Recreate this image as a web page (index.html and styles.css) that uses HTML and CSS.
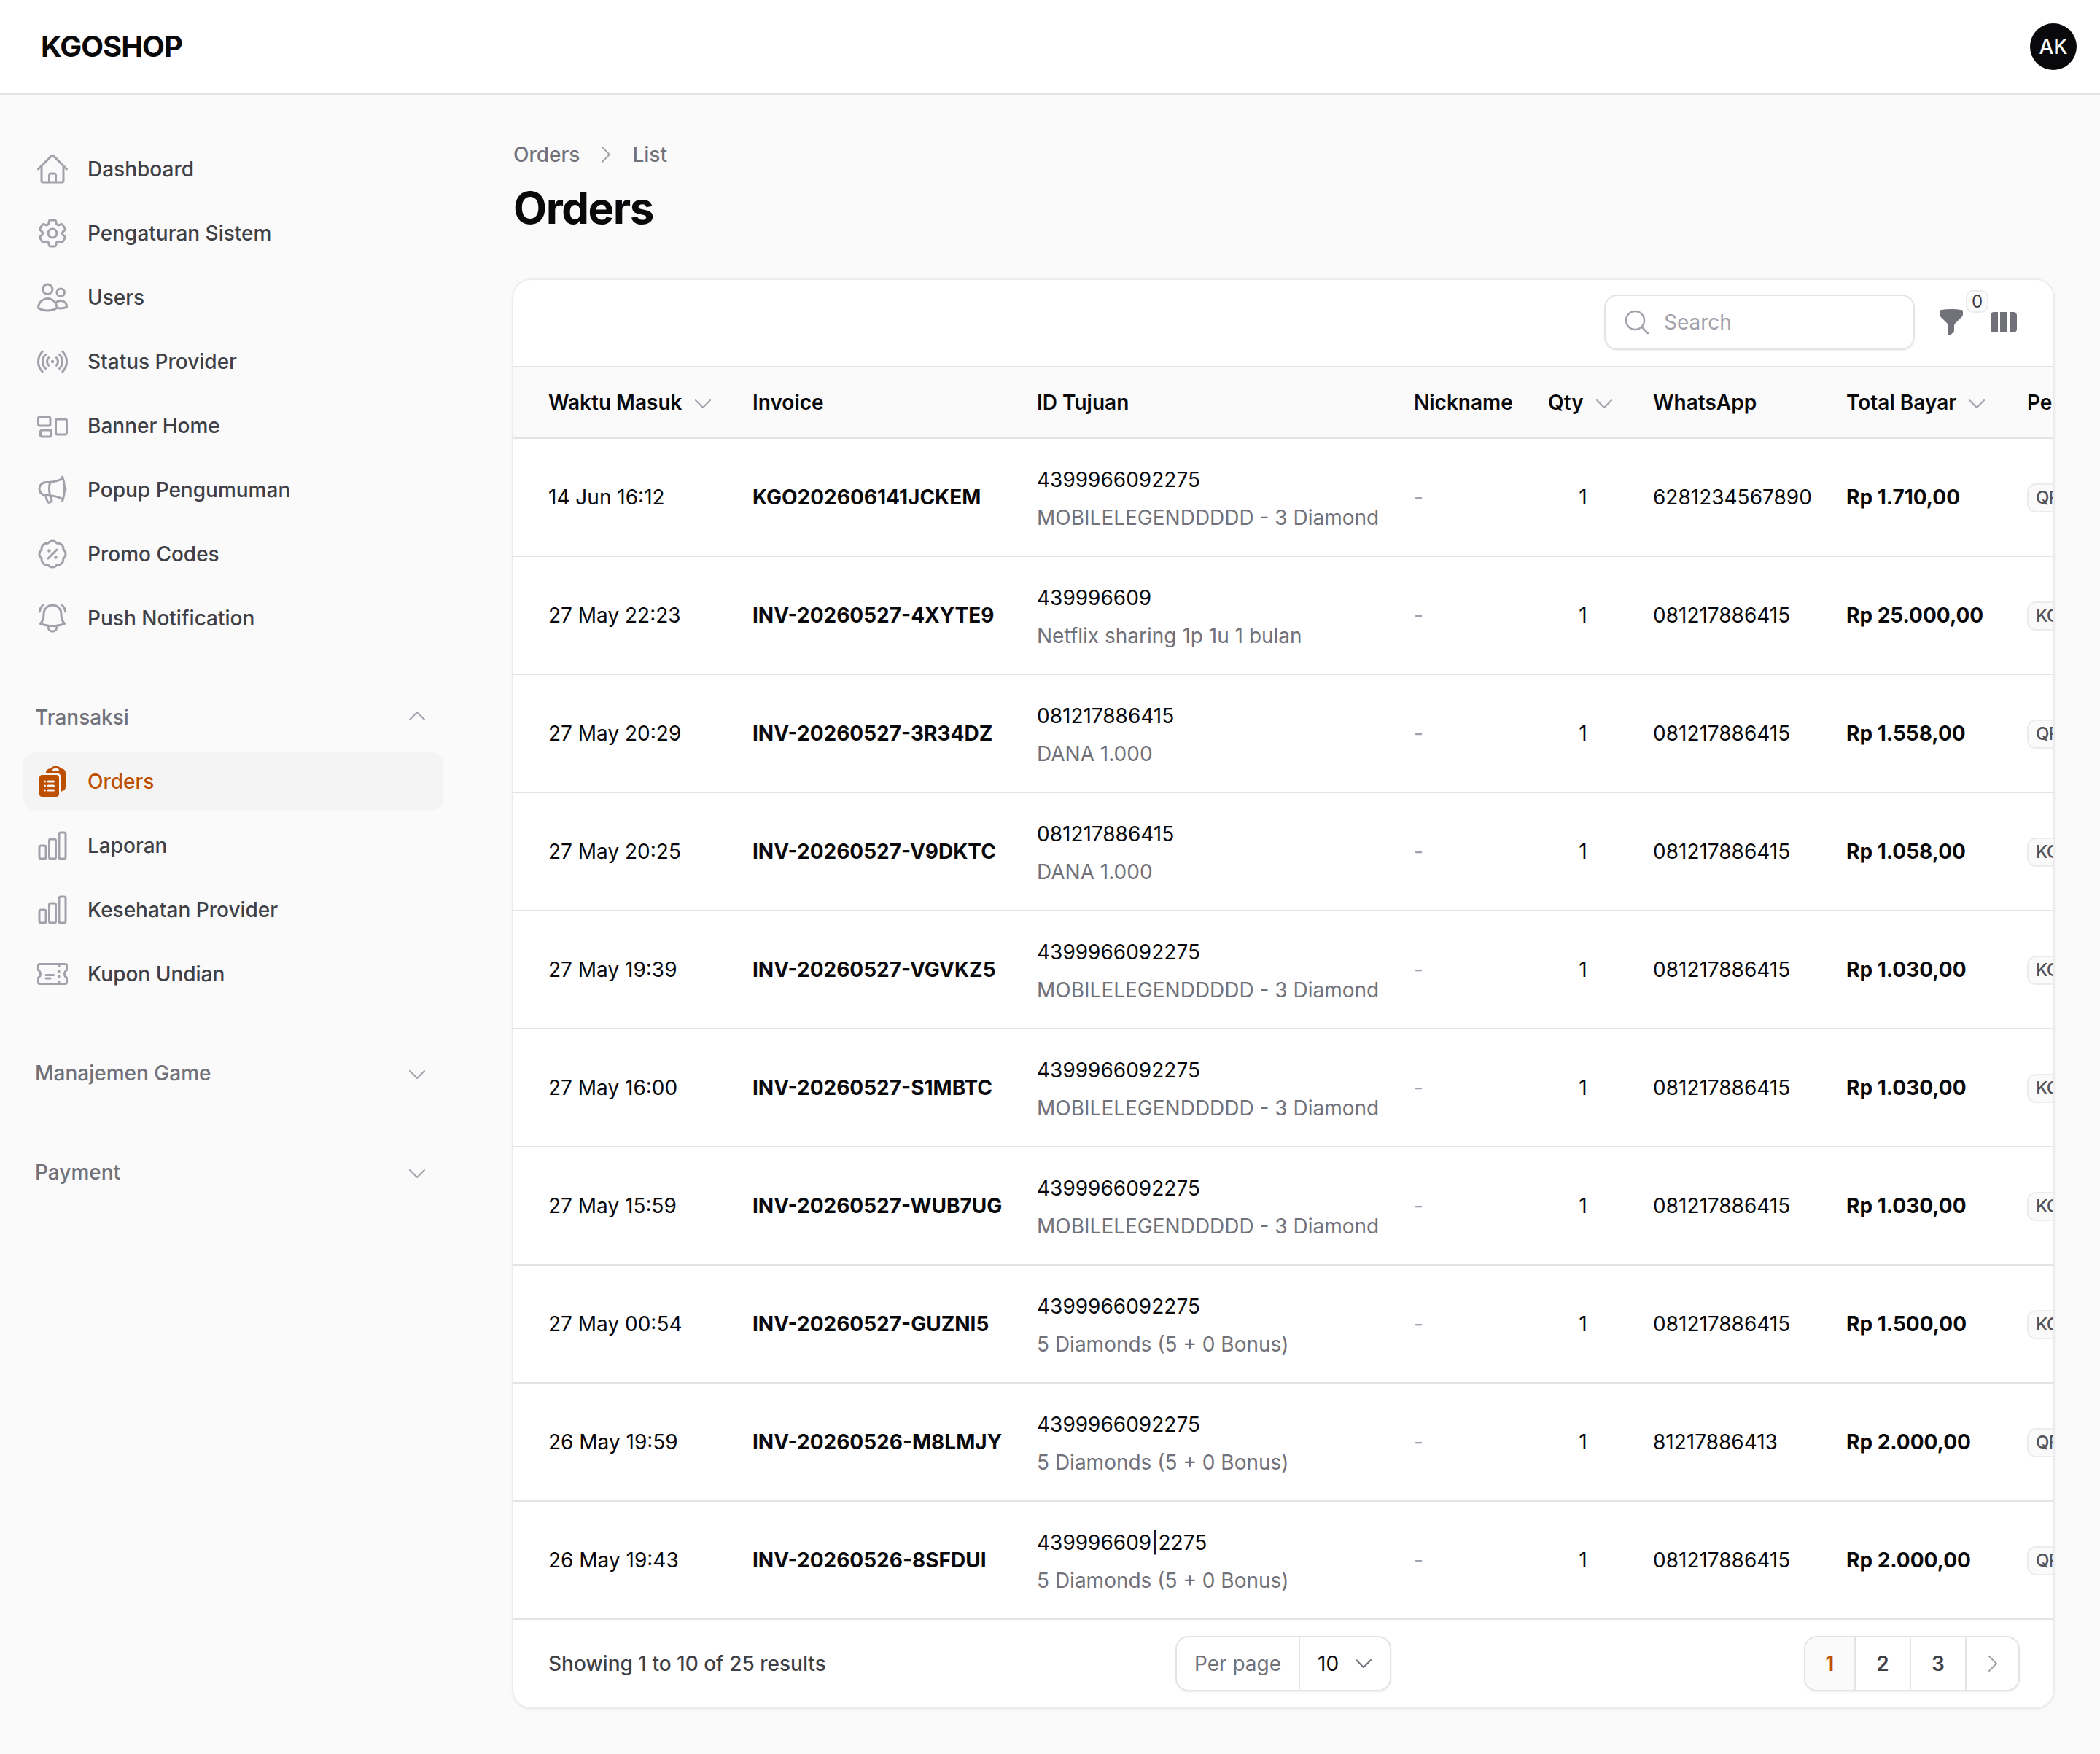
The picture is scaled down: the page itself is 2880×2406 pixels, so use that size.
FILE: index.html
```html
<!DOCTYPE html>
<html lang="id">
<head>
<meta charset="utf-8">
<title>Orders - KGOSHOP</title>
<link rel="stylesheet" href="styles.css">
</head>
<body>
<svg class="sprite" aria-hidden="true">
  <symbol id="chev-up" viewBox="0 0 24 24"><path d="m4.5 14.25 7.5-7.5 7.5 7.5"/></symbol>
  <symbol id="chev-down" viewBox="0 0 24 24"><path d="m19.5 9.75-7.5 7.5-7.5-7.5"/></symbol>
  <symbol id="chev-right" viewBox="0 0 24 24"><path d="m8.25 4.5 7.5 7.5-7.5 7.5"/></symbol>
  <symbol id="bars" viewBox="0 0 24 24"><path d="M3 13.125C3 12.504 3.504 12 4.125 12h2.25c.621 0 1.125.504 1.125 1.125v6.75C7.5 20.496 6.996 21 6.375 21h-2.25A1.125 1.125 0 0 1 3 19.875v-6.75ZM9.75 8.625c0-.621.504-1.125 1.125-1.125h2.25c.621 0 1.125.504 1.125 1.125v11.25c0 .621-.504 1.125-1.125 1.125h-2.25a1.125 1.125 0 0 1-1.125-1.125V8.625ZM16.5 4.125c0-.621.504-1.125 1.125-1.125h2.25C20.496 3 21 3.504 21 4.125v15.75c0 .621-.504 1.125-1.125 1.125h-2.25a1.125 1.125 0 0 1-1.125-1.125V4.125Z"/></symbol>
</svg>

<header class="topbar">
  <div class="logo">KGOSHOP</div>
  <div class="avatar">AK</div>
</header>

<div class="shell">
  <aside class="sidebar">
    <nav class="nav-group">
      <a class="nav-item"><svg class="nav-icon" viewBox="0 0 24 24"><path d="m2.25 12 8.954-8.955c.44-.439 1.152-.439 1.591 0L21.75 12M4.5 9.75v10.125c0 .621.504 1.125 1.125 1.125H9.75v-4.875c0-.621.504-1.125 1.125-1.125h2.25c.621 0 1.125.504 1.125 1.125V21h4.125c.621 0 1.125-.504 1.125-1.125V9.75M8.25 21h8.25"/></svg><span>Dashboard</span></a>
      <a class="nav-item"><svg class="nav-icon" viewBox="0 0 24 24"><path d="M9.594 3.94c.09-.542.56-.94 1.11-.94h2.593c.55 0 1.02.398 1.11.94l.213 1.281c.063.374.313.686.645.87.074.04.147.083.22.127.325.196.72.257 1.075.124l1.217-.456a1.125 1.125 0 0 1 1.37.49l1.296 2.247a1.125 1.125 0 0 1-.26 1.431l-1.003.827c-.293.241-.438.613-.43.992a7.723 7.723 0 0 1 0 .255c-.008.378.137.75.43.991l1.004.827c.424.35.534.955.26 1.43l-1.298 2.247a1.125 1.125 0 0 1-1.369.491l-1.217-.456c-.355-.133-.75-.072-1.076.124a6.47 6.47 0 0 1-.22.128c-.331.183-.581.495-.644.869l-.213 1.281c-.09.543-.56.94-1.11.94h-2.594c-.55 0-1.019-.398-1.11-.94l-.213-1.281c-.062-.374-.312-.686-.644-.87a6.52 6.52 0 0 1-.22-.127c-.325-.196-.72-.257-1.076-.124l-1.217.456a1.125 1.125 0 0 1-1.369-.49l-1.297-2.247a1.125 1.125 0 0 1 .26-1.431l1.004-.827c.292-.24.437-.613.43-.991a6.932 6.932 0 0 1 0-.255c.007-.38-.138-.751-.43-.992l-1.004-.827a1.125 1.125 0 0 1-.26-1.43l1.297-2.247a1.125 1.125 0 0 1 1.37-.491l1.216.456c.356.133.751.072 1.076-.124.072-.044.146-.086.22-.128.332-.183.582-.495.644-.869l.214-1.28Z"/><path d="M15 12a3 3 0 1 1-6 0 3 3 0 0 1 6 0Z"/></svg><span>Pengaturan Sistem</span></a>
      <a class="nav-item"><svg class="nav-icon" viewBox="0 0 24 24"><path d="M15 19.128a9.38 9.38 0 0 0 2.625.372 9.337 9.337 0 0 0 4.121-.952 4.125 4.125 0 0 0-7.533-2.493M15 19.128v-.003c0-1.113-.285-2.16-.786-3.07M15 19.128v.106A12.318 12.318 0 0 1 8.624 21c-2.331 0-4.512-.645-6.374-1.766l-.001-.109a6.375 6.375 0 0 1 11.964-3.07M12 6.375a3.375 3.375 0 1 1-6.75 0 3.375 3.375 0 0 1 6.75 0Zm8.25 2.25a2.625 2.625 0 1 1-5.25 0 2.625 2.625 0 0 1 5.25 0Z"/></svg><span>Users</span></a>
      <a class="nav-item"><svg class="nav-icon" viewBox="0 0 24 24"><path d="M9.348 14.652a3.75 3.75 0 0 1 0-5.304m5.304 0a3.75 3.75 0 0 1 0 5.304m-7.425 2.121a6.75 6.75 0 0 1 0-9.546m9.546 0a6.75 6.75 0 0 1 0 9.546M5.106 18.894c-3.808-3.807-3.808-9.98 0-13.788m13.788 0c3.808 3.807 3.808 9.98 0 13.788M12 12h.008v.008H12V12Zm.375 0a.375.375 0 1 1-.75 0 .375.375 0 0 1 .75 0Z"/></svg><span>Status Provider</span></a>
      <a class="nav-item"><svg class="nav-icon" viewBox="0 0 24 24"><path d="M2.25 7.125C2.25 6.504 2.754 6 3.375 6h6c.621 0 1.125.504 1.125 1.125v3.75c0 .621-.504 1.125-1.125 1.125h-6a1.125 1.125 0 0 1-1.125-1.125v-3.75ZM14.25 8.625c0-.621.504-1.125 1.125-1.125h5.25c.621 0 1.125.504 1.125 1.125v8.25c0 .621-.504 1.125-1.125 1.125h-5.25a1.125 1.125 0 0 1-1.125-1.125v-8.25ZM3.75 16.125c0-.621.504-1.125 1.125-1.125h5.25c.621 0 1.125.504 1.125 1.125v2.25c0 .621-.504 1.125-1.125 1.125h-5.25a1.125 1.125 0 0 1-1.125-1.125v-2.25Z"/></svg><span>Banner Home</span></a>
      <a class="nav-item"><svg class="nav-icon" viewBox="0 0 24 24"><path d="M10.34 15.84c-.688-.06-1.386-.09-2.09-.09H7.5a4.5 4.5 0 1 1 0-9h.75c.704 0 1.402-.03 2.09-.09m0 9.18c.253.962.584 1.892.985 2.783.247.55.06 1.21-.463 1.511l-.657.38c-.551.318-1.26.117-1.527-.461a20.845 20.845 0 0 1-1.44-4.282m3.102.069a18.03 18.03 0 0 1-.59-4.59c0-1.586.205-3.124.59-4.59m0 9.18a23.848 23.848 0 0 1 8.835 2.535M10.34 6.66a23.847 23.847 0 0 0 8.835-2.535m0 0A23.74 23.74 0 0 0 18.795 3m.38 1.125a23.91 23.91 0 0 1 1.014 5.395m-1.014 8.855c-.118.38-.245.754-.38 1.125m.38-1.125a23.91 23.91 0 0 0 1.014-5.395m0-3.46c.495.413.811 1.035.811 1.73 0 .695-.316 1.317-.811 1.73m0-3.46a24.347 24.347 0 0 1 0 3.46"/></svg><span>Popup Pengumuman</span></a>
      <a class="nav-item"><svg class="nav-icon" viewBox="0 0 24 24"><path d="m8.99 14.993 6-6m6 3.001c0 1.268-.63 2.39-1.593 3.069a3.746 3.746 0 0 1-1.043 3.296 3.745 3.745 0 0 1-3.296 1.043 3.745 3.745 0 0 1-3.068 1.593c-1.268 0-2.39-.63-3.068-1.593a3.745 3.745 0 0 1-3.296-1.043 3.746 3.746 0 0 1-1.043-3.297 3.746 3.746 0 0 1-1.593-3.068c0-1.268.63-2.39 1.593-3.068a3.746 3.746 0 0 1 1.043-3.297 3.745 3.745 0 0 1 3.296-1.042 3.745 3.745 0 0 1 3.068-1.594c1.268 0 2.39.63 3.068 1.593a3.745 3.745 0 0 1 3.296 1.043 3.746 3.746 0 0 1 1.043 3.297 3.746 3.746 0 0 1 1.593 3.068ZM9.74 9.743h.008v.007H9.74v-.007Zm.375 0a.375.375 0 1 1-.75 0 .375.375 0 0 1 .75 0Zm4.125 4.5h.008v.008h-.008v-.008Zm.375 0a.375.375 0 1 1-.75 0 .375.375 0 0 1 .75 0Z"/></svg><span>Promo Codes</span></a>
      <a class="nav-item"><svg class="nav-icon" viewBox="0 0 24 24"><path d="M14.857 17.082a23.848 23.848 0 0 0 5.454-1.31A8.967 8.967 0 0 1 18 9.75V9A6 6 0 0 0 6 9v.75a8.967 8.967 0 0 1-2.312 6.022c1.733.64 3.56 1.085 5.455 1.31m5.714 0a24.255 24.255 0 0 1-5.714 0m5.714 0a3 3 0 1 1-5.714 0M3.124 7.5A8.969 8.969 0 0 1 5.292 3m13.416 0a8.969 8.969 0 0 1 2.168 4.5"/></svg><span>Push Notification</span></a>
    </nav>

    <nav class="nav-group">
      <div class="nav-label"><span>Transaksi</span><svg class="chev-lg"><use href="#chev-up"/></svg></div>
      <a class="nav-item is-active"><svg class="nav-icon-solid" viewBox="0 0 24 24"><path fill-rule="evenodd" d="M7.502 6h7.128A3.375 3.375 0 0 1 18 9.375v9.375a3 3 0 0 0 3-3V6.108c0-1.505-1.125-2.811-2.664-2.94a48.972 48.972 0 0 0-.673-.05A3 3 0 0 0 15 1.5h-1.5a3 3 0 0 0-2.663 1.618c-.225.015-.45.032-.673.05C8.662 3.295 7.554 4.542 7.502 6ZM13.5 3A1.5 1.5 0 0 0 12 4.5h4.5A1.5 1.5 0 0 0 15 3h-1.5Z"/><path fill-rule="evenodd" d="M3 9.375C3 8.339 3.84 7.5 4.875 7.5h9.75c1.036 0 1.875.84 1.875 1.875v11.25c0 1.035-.84 1.875-1.875 1.875h-9.75A1.875 1.875 0 0 1 3 20.625V9.375ZM6 12a.75.75 0 0 1 .75-.75h.008a.75.75 0 0 1 .75.75v.008a.75.75 0 0 1-.75.75H6.75a.75.75 0 0 1-.75-.75V12Zm2.25 0a.75.75 0 0 1 .75-.75h3.75a.75.75 0 0 1 0 1.5H9a.75.75 0 0 1-.75-.75ZM6 15a.75.75 0 0 1 .75-.75h.008a.75.75 0 0 1 .75.75v.008a.75.75 0 0 1-.75.75H6.75a.75.75 0 0 1-.75-.75V15Zm2.25 0a.75.75 0 0 1 .75-.75h3.75a.75.75 0 0 1 0 1.5H9a.75.75 0 0 1-.75-.75ZM6 18a.75.75 0 0 1 .75-.75h.008a.75.75 0 0 1 .75.75v.008a.75.75 0 0 1-.75.75H6.75a.75.75 0 0 1-.75-.75V18Zm2.25 0a.75.75 0 0 1 .75-.75h3.75a.75.75 0 0 1 0 1.5H9a.75.75 0 0 1-.75-.75Z"/></svg><span>Orders</span></a>
      <a class="nav-item"><svg class="nav-icon"><use href="#bars"/></svg><span>Laporan</span></a>
      <a class="nav-item"><svg class="nav-icon"><use href="#bars"/></svg><span>Kesehatan Provider</span></a>
      <a class="nav-item"><svg class="nav-icon" viewBox="0 0 24 24"><path d="M16.5 6v.75m0 3v.75m0 3v.75m0 3V18m-9-5.25h5.25M7.5 15h3M3.375 5.25c-.621 0-1.125.504-1.125 1.125v3.026a2.999 2.999 0 0 1 0 5.198v3.026c0 .621.504 1.125 1.125 1.125h17.25c.621 0 1.125-.504 1.125-1.125v-3.026a2.999 2.999 0 0 1 0-5.198V6.375c0-.621-.504-1.125-1.125-1.125H3.375Z"/></svg><span>Kupon Undian</span></a>
    </nav>

    <nav class="nav-group">
      <div class="nav-label"><span>Manajemen Game</span><svg class="chev-lg"><use href="#chev-down"/></svg></div>
    </nav>
    <nav class="nav-group">
      <div class="nav-label"><span>Payment</span><svg class="chev-lg"><use href="#chev-down"/></svg></div>
    </nav>
  </aside>

  <main class="main">
    <div class="crumbs"><span>Orders</span><svg class="chev-lg crumb-sep"><use href="#chev-right"/></svg><span>List</span></div>
    <h1 class="title">Orders</h1>

    <section class="card">
      <div class="toolbar">
        <div class="search">
          <svg class="search-icon" viewBox="0 0 24 24"><path d="m21 21-5.197-5.197m0 0A7.5 7.5 0 1 0 5.196 5.196a7.5 7.5 0 0 0 10.607 10.607Z"/></svg>
          <span>Search</span>
        </div>
        <div class="tool">
          <svg class="tool-icon" viewBox="0 0 20 20"><path d="M2.628 1.601C5.028 1.206 7.49 1 10 1s4.973.206 7.372.601a.75.75 0 0 1 .628.74v2.288a2.25 2.25 0 0 1-.659 1.59l-4.682 4.683a2.25 2.25 0 0 0-.659 1.59v3.037c0 .684-.31 1.33-.844 1.757l-1.937 1.55A.75.75 0 0 1 8 18.25v-5.757a2.25 2.25 0 0 0-.659-1.591L2.659 6.22A2.25 2.25 0 0 1 2 4.629V2.34a.75.75 0 0 1 .628-.74Z"/></svg>
          <span class="tool-badge">0</span>
        </div>
        <svg class="tool-icon" viewBox="0 0 20 20"><path d="M14 17h2.75A2.25 2.25 0 0 0 19 14.75v-9.5A2.25 2.25 0 0 0 16.75 3H14v14ZM12.5 3h-5v14h5V3ZM3.25 3H6v14H3.25A2.25 2.25 0 0 1 1 14.75v-9.5A2.25 2.25 0 0 1 3.25 3Z"/></svg>
      </div>

      <table class="orders">
        <colgroup>
          <col class="c-time"><col class="c-inv"><col class="c-id"><col class="c-nick"><col class="c-qty"><col class="c-wa"><col class="c-total"><col class="c-pay">
        </colgroup>
        <thead>
          <tr>
            <th><span class="th-sort">Waktu Masuk<svg class="chev-lg"><use href="#chev-down"/></svg></span></th>
            <th>Invoice</th>
            <th>ID Tujuan</th>
            <th>Nickname</th>
            <th><span class="th-sort">Qty<svg class="chev-lg"><use href="#chev-down"/></svg></span></th>
            <th>WhatsApp</th>
            <th><span class="th-sort">Total Bayar<svg class="chev-lg"><use href="#chev-down"/></svg></span></th>
            <th>Pembayaran</th>
          </tr>
        </thead>
        <tbody>
          <tr><td>14 Jun 16:12</td><td class="strong">KGO202606141JCKEM</td><td><div class="id-main">4399966092275</div><div class="id-sub">MOBILELEGENDDDDD - 3 Diamond</div></td><td class="dash">-</td><td class="qty">1</td><td>6281234567890</td><td class="strong">Rp 1.710,00</td><td><span class="pay">QRIS</span></td></tr>
          <tr><td>27 May 22:23</td><td class="strong">INV-20260527-4XYTE9</td><td><div class="id-main">439996609</div><div class="id-sub">Netflix sharing 1p 1u 1 bulan</div></td><td class="dash">-</td><td class="qty">1</td><td>081217886415</td><td class="strong">Rp 25.000,00</td><td><span class="pay">KOIN</span></td></tr>
          <tr><td>27 May 20:29</td><td class="strong">INV-20260527-3R34DZ</td><td><div class="id-main">081217886415</div><div class="id-sub">DANA 1.000</div></td><td class="dash">-</td><td class="qty">1</td><td>081217886415</td><td class="strong">Rp 1.558,00</td><td><span class="pay">QRIS</span></td></tr>
          <tr><td>27 May 20:25</td><td class="strong">INV-20260527-V9DKTC</td><td><div class="id-main">081217886415</div><div class="id-sub">DANA 1.000</div></td><td class="dash">-</td><td class="qty">1</td><td>081217886415</td><td class="strong">Rp 1.058,00</td><td><span class="pay">KOIN</span></td></tr>
          <tr><td>27 May 19:39</td><td class="strong">INV-20260527-VGVKZ5</td><td><div class="id-main">4399966092275</div><div class="id-sub">MOBILELEGENDDDDD - 3 Diamond</div></td><td class="dash">-</td><td class="qty">1</td><td>081217886415</td><td class="strong">Rp 1.030,00</td><td><span class="pay">KOIN</span></td></tr>
          <tr><td>27 May 16:00</td><td class="strong">INV-20260527-S1MBTC</td><td><div class="id-main">4399966092275</div><div class="id-sub">MOBILELEGENDDDDD - 3 Diamond</div></td><td class="dash">-</td><td class="qty">1</td><td>081217886415</td><td class="strong">Rp 1.030,00</td><td><span class="pay">KOIN</span></td></tr>
          <tr><td>27 May 15:59</td><td class="strong">INV-20260527-WUB7UG</td><td><div class="id-main">4399966092275</div><div class="id-sub">MOBILELEGENDDDDD - 3 Diamond</div></td><td class="dash">-</td><td class="qty">1</td><td>081217886415</td><td class="strong">Rp 1.030,00</td><td><span class="pay">KOIN</span></td></tr>
          <tr><td>27 May 00:54</td><td class="strong">INV-20260527-GUZNI5</td><td><div class="id-main">4399966092275</div><div class="id-sub">5 Diamonds (5 + 0 Bonus)</div></td><td class="dash">-</td><td class="qty">1</td><td>081217886415</td><td class="strong">Rp 1.500,00</td><td><span class="pay">KOIN</span></td></tr>
          <tr><td>26 May 19:59</td><td class="strong">INV-20260526-M8LMJY</td><td><div class="id-main">4399966092275</div><div class="id-sub">5 Diamonds (5 + 0 Bonus)</div></td><td class="dash">-</td><td class="qty">1</td><td>81217886413</td><td class="strong">Rp 2.000,00</td><td><span class="pay">QRIS</span></td></tr>
          <tr><td>26 May 19:43</td><td class="strong">INV-20260526-8SFDUI</td><td><div class="id-main">439996609|2275</div><div class="id-sub">5 Diamonds (5 + 0 Bonus)</div></td><td class="dash">-</td><td class="qty">1</td><td>081217886415</td><td class="strong">Rp 2.000,00</td><td><span class="pay">QRIS</span></td></tr>
        </tbody>
      </table>

      <footer class="card-foot">
        <div class="foot-count">Showing 1 to 10 of 25 results</div>
        <div class="perpage">
          <span class="perpage-label">Per page</span>
          <span class="perpage-select">10<svg class="chev-md"><use href="#chev-down"/></svg></span>
        </div>
        <div class="pager">
          <span class="page is-current">1</span>
          <span class="page">2</span>
          <span class="page">3</span>
          <span class="page page-next"><svg class="chev-lg page-next-icon"><use href="#chev-right"/></svg></span>
        </div>
      </footer>
    </section>
  </main>
</div>
</body>
</html>
```

FILE: styles.css
```css
* { box-sizing: border-box; }
html, body { margin: 0; padding: 0; }
body {
  width: 2880px;
  min-height: 2406px;
  background: #fafafa;
  color: #09090b;
  font-family: Inter, "Liberation Sans", sans-serif;
  font-size: 28px;
  line-height: 40px;
}
.sprite { display: none; }

svg { fill: none; stroke: currentColor; stroke-width: 1.5; stroke-linecap: round; stroke-linejoin: round; flex: none; }
.chev-lg { width: 32px; height: 32px; color: #a1a1aa; }
.chev-md { width: 32px; height: 32px; color: #71717a; margin-bottom: 4px; }

.topbar {
  height: 130px;
  background: #fff;
  border-bottom: 2px solid #e4e4e7;
  display: flex;
  align-items: center;
  justify-content: space-between;
  padding: 0 32px 0 56px;
}
.logo { font-size: 40px; font-weight: 700; letter-spacing: -1px; line-height: 48px; }
.avatar {
  width: 64px; height: 64px; border-radius: 50%;
  background: #09090b; color: #fff;
  display: flex; align-items: center; justify-content: center;
  font-weight: 500;
}

.shell { display: flex; align-items: flex-start; }

.sidebar {
  width: 640px;
  flex: none;
  padding: 62px 32px 0;
  display: flex;
  flex-direction: column;
  gap: 56px;
}
.nav-group { display: flex; flex-direction: column; gap: 8px; }
.nav-item {
  height: 80px;
  display: flex;
  align-items: center;
  gap: 24px;
  padding: 0 16px;
  border-radius: 16px;
  color: #3f3f46;
  font-weight: 500;
}
.nav-icon { width: 48px; height: 48px; color: #a1a1aa; }
.nav-icon-solid { width: 48px; height: 48px; color: #bd4f00; fill: currentColor; stroke: none; }
.nav-item.is-active { background: #f4f4f5; color: #bd4f00; }
.nav-label {
  height: 80px;
  display: flex;
  align-items: center;
  justify-content: space-between;
  padding: 0 20px 0 16px;
  color: #71717a;
  font-weight: 500;
}

.main { flex: 1; min-width: 0; padding: 62px 64px 64px; }
.crumbs { display: flex; align-items: center; gap: 20px; color: #71717a; font-weight: 500; }
.title { margin: 17px 0 63px; font-size: 60px; line-height: 72px; font-weight: 700; letter-spacing: -1.5px; }

.card {
  background: #fff;
  border-radius: 24px;
  overflow: hidden;
  box-shadow: 0 0 0 2px #ececee, 0 2px 4px rgba(0, 0, 0, .1);
}

.toolbar {
  height: 120px;
  border-bottom: 2px solid #e4e4e7;
  display: flex;
  align-items: center;
  justify-content: flex-end;
  gap: 32px;
  padding: 0 48px 3px;
}
.search {
  width: 422px; height: 72px;
  border-radius: 16px;
  background: #fff;
  box-shadow: 0 0 0 2px #e4e4e7, 0 2px 4px rgba(0, 0, 0, .12);
  display: flex; align-items: center; gap: 17px;
  padding-left: 23px;
  color: #a1a1aa;
}
.search-icon { width: 40px; height: 40px; color: #a1a1aa; }
.tool { position: relative; display: flex; }
.tool-icon { width: 40px; height: 40px; color: #71717a; fill: currentColor; stroke: none; }
.tool-badge {
  position: absolute; left: 40px; top: -24px;
  width: 31px; height: 31px;
  border-radius: 10px;
  border: 2px solid #ececee;
  background: #fafafa;
  color: #3f3f46;
  font-size: 24px; line-height: 27px; text-align: center;
}

.orders { table-layout: fixed; width: 2252px; border-collapse: separate; border-spacing: 0; }
.c-time { width: 304px; } .c-inv { width: 390px; } .c-id { width: 517px; } .c-nick { width: 184px; }
.c-qty { width: 144px; } .c-wa { width: 265px; } .c-total { width: 248px; } .c-pay { width: 200px; }
.orders th, .orders td {
  padding: 0 0 0 24px;
  text-align: left;
  white-space: nowrap;
  border-bottom: 2px solid #e4e4e7;
  overflow: hidden;
}
.orders th:first-child, .orders td:first-child { padding-left: 48px; }
.orders th { height: 98px; background: #fafafa; font-weight: 600; }
.orders td { height: 162px; }
.th-sort { display: inline-flex; align-items: center; gap: 12px; }
.strong { font-weight: 700; }
.id-main { line-height: 40px; padding-top: 3px; }
.id-sub { line-height: 40px; margin-top: 12px; color: #71717a; }
.dash { color: #a1a1aa; }
.orders td.qty { padding: 0; text-align: center; }
.pay {
  display: inline-flex; align-items: center;
  height: 40px;
  padding: 0 10px;
  border-radius: 12px;
  border: 2px solid #ececee;
  background: #fafafa;
  color: #52525b;
  font-size: 24px; font-weight: 500;
  letter-spacing: -1px;
}

.card-foot {
  height: 120px;
  display: grid;
  grid-template-columns: 1fr auto 1fr;
  align-items: center;
  padding: 0 48px;
}
.foot-count { color: #3f3f46; font-weight: 500; }
.perpage {
  height: 72px; display: flex; align-items: stretch;
  border-radius: 16px; background: #fff;
  box-shadow: 0 0 0 2px #e4e4e7, 0 2px 4px rgba(0, 0, 0, .12);
}
.perpage-label {
  display: flex; align-items: center;
  padding: 0 24px;
  color: #71717a;
  border-right: 2px solid #e4e4e7;
}
.perpage-select { display: flex; align-items: center; gap: 18px; padding: 0 20px 0 24px; }
.pager {
  justify-self: end;
  height: 72px; display: flex; align-items: stretch;
  border-radius: 16px; background: #fff;
  box-shadow: 0 0 0 2px #e4e4e7, 0 2px 4px rgba(0, 0, 0, .12);
  color: #3f3f46; font-weight: 600;
}
.page {
  display: flex; align-items: center; justify-content: center;
  width: 76px;
  border-right: 2px solid #e4e4e7;
}
.page.is-current { width: 69px; background: #fafafa; color: #bd4f00; border-radius: 16px 0 0 16px; }
.page-next { width: 71px; border-right: 0; }
```
